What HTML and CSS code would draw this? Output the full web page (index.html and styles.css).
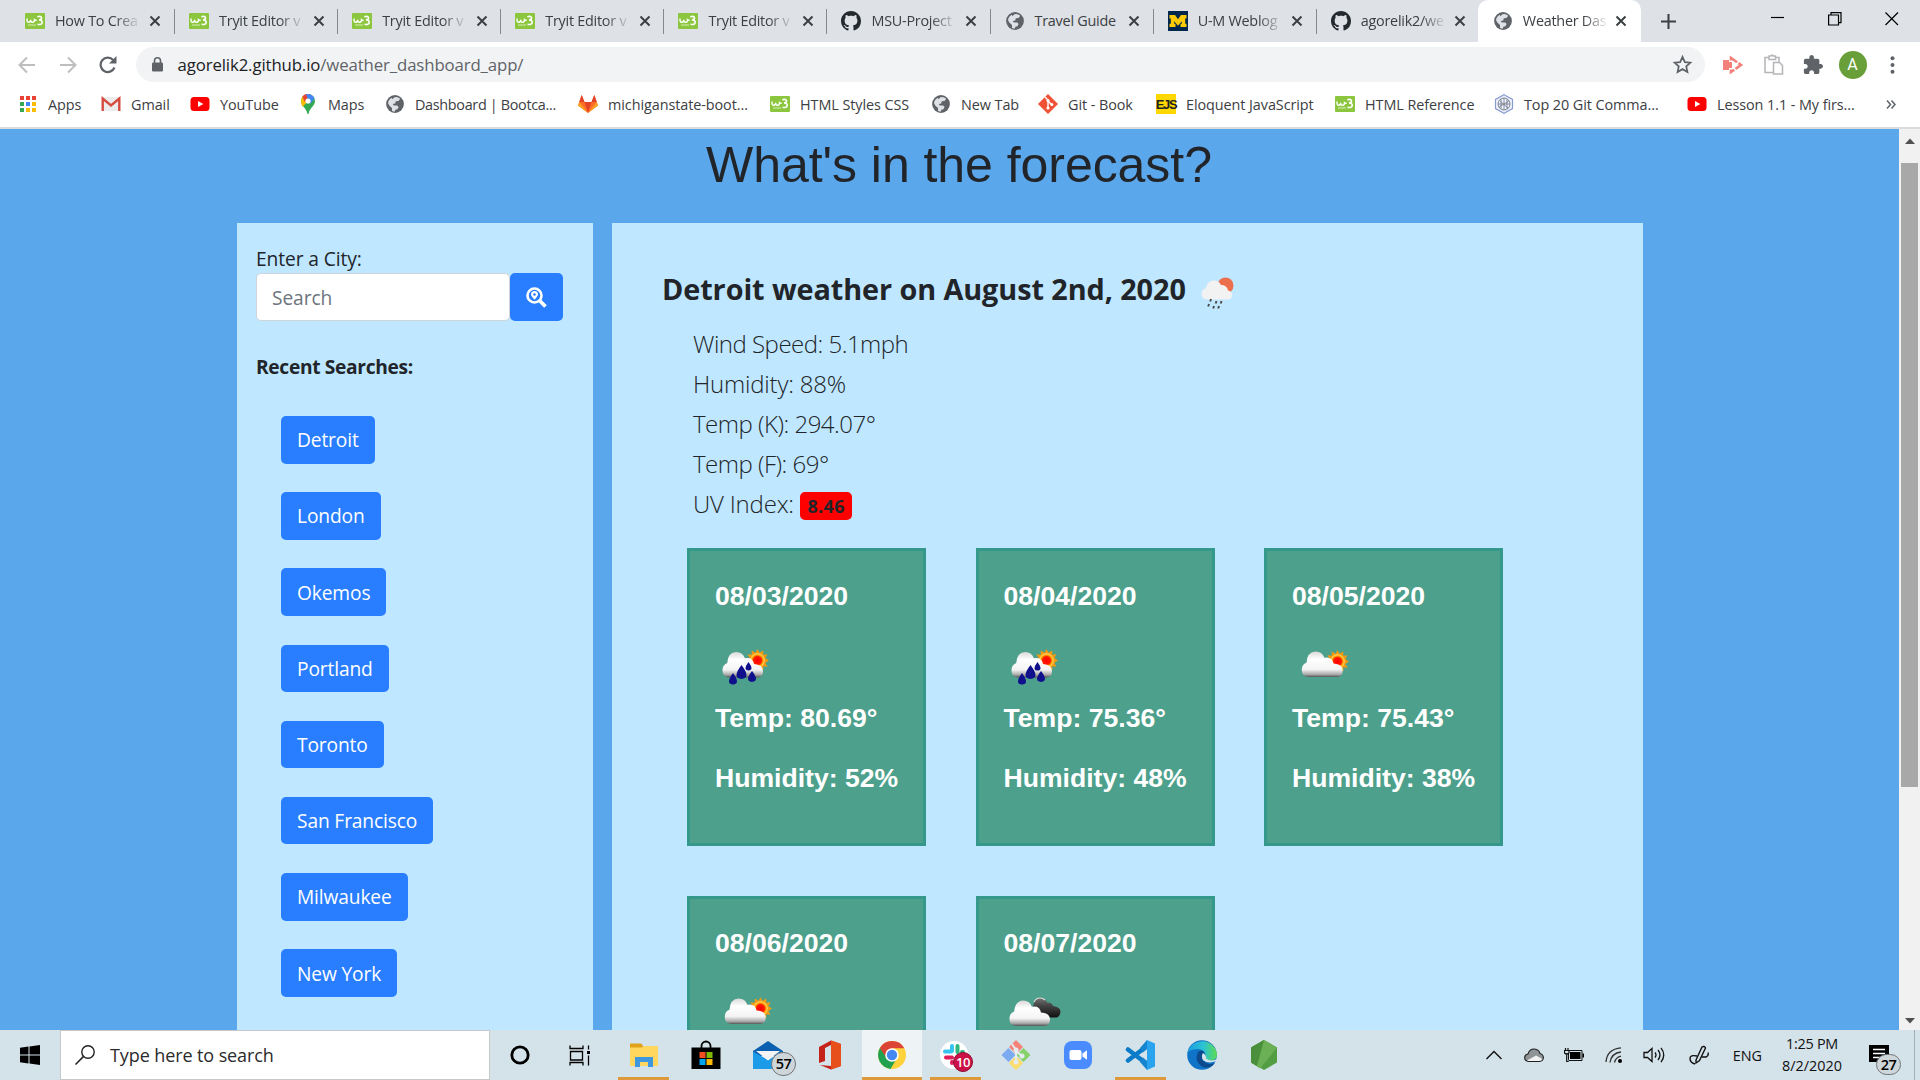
FILE: index.html
```html
<!DOCTYPE html>
<html lang="en">
<head>
<meta charset="utf-8">
<title>Weather Dashboard</title>
<link rel="stylesheet" href="styles.css">
</head>
<body>
<svg class="defs" width="0" height="0" aria-hidden="true">
  <defs>
    <linearGradient id="cloudFill" x1="0" y1="0" x2="0" y2="1">
      <stop offset="0" stop-color="#d9d9d9"/><stop offset=".3" stop-color="#fff"/><stop offset=".7" stop-color="#f4f4f4"/><stop offset=".9" stop-color="#a8a8a8"/><stop offset="1" stop-color="#555"/>
    </linearGradient>
    <linearGradient id="darkFill" x1="0" y1="0" x2="0" y2="1">
      <stop offset="0" stop-color="#777"/><stop offset=".4" stop-color="#444"/><stop offset="1" stop-color="#111"/>
    </linearGradient>
    <radialGradient id="sunFill"><stop offset="0" stop-color="#f00"/><stop offset=".55" stop-color="#ff1a00"/><stop offset=".8" stop-color="#ffb400"/><stop offset="1" stop-color="#ffd98a"/></radialGradient>
    <linearGradient id="edgeA" x1="0" y1="0" x2="1" y2="0"><stop offset="0" stop-color="#1b9de2"/><stop offset=".55" stop-color="#2cc3d2"/><stop offset="1" stop-color="#5fdc4e"/></linearGradient>
  </defs>
  <symbol id="w3" viewBox="0 0 20 20">
    <rect x="0" y="2" width="20" height="16" rx="1" fill="#8cc63f"/>
    <path d="M2 7.500q-.3 4 1.900 3.800 1.800-.2 1.800-2.500-.1 2.500 1.800 2.500 2 0 2-2.600 1 1 2.300.3" fill="none" stroke="#fff" stroke-width="1.400"/>
    <path d="M12.300 5.700q4-1 4.200 1 .1 2-2.500 2.300 3.500 0 3.200 2.600-.5 2.600-4.700 1.700" fill="none" stroke="#fff" stroke-width="1.600"/>
    <path d="M3 14h8" stroke="#d8edb8" stroke-width="1"/>
  </symbol>
  <symbol id="globe" viewBox="0 0 20 20">
    <circle cx="10" cy="10" r="8.900" fill="#5f6368"/>
    <path d="M9.500 3.300q3.300-.8 5.700 1.500L13.500 7l-2.700.3-.6 2.200-2.400.6 1 1.400h3.400l1.400 1.500-1.200 2.200-2 .6-.7 2-2.700-.8V14l-2.500-2.300L3 9.200Q3.400 5.200 7 3.700l.3 1.600z" fill="#dee1e6"/>
  </symbol>
  <symbol id="github" viewBox="0 0 16 16">
    <path fill="#24292e" d="M8 0C3.580 0 0 3.580 0 8c0 3.540 2.290 6.530 5.470 7.590.4.070.55-.17.55-.38 0-.19-.01-.82-.01-1.490-2.010.37-2.530-.49-2.690-.94-.09-.23-.48-.94-.82-1.130-.28-.15-.68-.52-.01-.53.63-.01 1.080.58 1.230.82.72 1.210 1.870.87 2.330.66.07-.52.28-.87.51-1.070-1.780-.2-3.640-.89-3.640-3.950 0-.87.31-1.590.82-2.150-.08-.2-.36-1.020.08-2.120 0 0 .67-.21 2.200.82.64-.18 1.320-.27 2-.27s1.360.09 2 .27c1.530-1.040 2.200-.82 2.200-.82.44 1.100.16 1.920.08 2.120.51.56.82 1.270.82 2.150 0 3.070-1.870 3.750-3.650 3.950.29.25.54.73.54 1.480 0 1.070-.01 1.930-.01 2.200 0 .21.15.46.55.38A8.010 8.010 0 0016 8c0-4.420-3.580-8-8-8z"/>
  </symbol>
  <symbol id="x" viewBox="0 0 12 12"><path d="M1.500 1.500l9 9M10.500 1.500l-9 9" stroke="#3c4043" stroke-width="2" fill="none"/></symbol>
  <symbol id="youtube" viewBox="0 0 20 20"><rect x=".5" y="3" width="19" height="14" rx="3.500" fill="#f00"/><path d="M8 7l5.300 3L8 13z" fill="#fff"/></symbol>
  <symbol id="sun" viewBox="0 0 24 24">
    <path d="M12 0l2 4 4-2.500v4.600l4.500-.6-2.300 4L24 12l-3.800 2.500 2.300 4-4.500-.6v4.600L14 20l-2 4-2-4-4 2.500v-4.600l-4.500.6 2.300-4L0 12l3.800-2.500-2.300-4 4.500.6V1.500L10 4z" fill="#f39a10"/>
    <circle cx="12" cy="12" r="7.500" fill="url(#sunFill)"/>
  </symbol>
  <symbol id="cloud" viewBox="0 0 44 28">
    <path d="M7 27q-6.500-.5-6.500-7.500 0-5.500 5-7.500Q6 1 15 .500q6.500 0 9 6.500 8-1.500 9.500 6 9.500.5 9.500 7.500 0 6-6 6.500z" fill="url(#cloudFill)"/>
  </symbol>
  <symbol id="rainSun" viewBox="0 0 62 62">
    <use href="#sun" x="32" y="13" width="23" height="23"/>
    <use href="#cloud" x="8" y="15.500" width="42" height="27"/>
    <g fill="#10108c"><path d="M19 37q8 11 0 11.500-8-.5 0-11.500zM27.500 29q10 13 0 14-10-1 0-14zM38 35q8 10 0 11-8-1 0-11zM34.500 26q6 8 0 8.500-6-.5 0-8.500z"/></g>
  </symbol>
  <symbol id="cloudSun" viewBox="0 0 62 62">
    <use href="#sun" x="35" y="14" width="23" height="23"/>
    <use href="#cloud" x="10" y="15" width="43" height="27"/>
  </symbol>
  <symbol id="clouds" viewBox="0 0 62 62">
    <path d="M30 24q1-9 7-9.500 5 0 7 5 5-.5 6 3.500 7.500 1 7.500 5.500-.5 6-5 6H38z" fill="url(#darkFill)"/>
    <path d="M31 19q2-4 6-4 3 0 5 2" stroke="#ddd" stroke-width="1.200" fill="none"/>
    <use href="#cloud" x="6" y="17" width="42" height="27"/>
  </symbol>
</svg>

<div class="screen">
  <div class="tabs">
    <div class="tab"><svg class="fav"><use href="#w3"/></svg><span class="ttl">How To Crea</span><svg class="close"><use href="#x"/></svg></div>
    <div class="tab"><svg class="fav"><use href="#w3"/></svg><span class="ttl">Tryit Editor v</span><svg class="close"><use href="#x"/></svg></div>
    <div class="tab"><svg class="fav"><use href="#w3"/></svg><span class="ttl">Tryit Editor v</span><svg class="close"><use href="#x"/></svg></div>
    <div class="tab"><svg class="fav"><use href="#w3"/></svg><span class="ttl">Tryit Editor v</span><svg class="close"><use href="#x"/></svg></div>
    <div class="tab"><svg class="fav"><use href="#w3"/></svg><span class="ttl">Tryit Editor v</span><svg class="close"><use href="#x"/></svg></div>
    <div class="tab"><svg class="fav"><use href="#github"/></svg><span class="ttl">MSU-Project</span><svg class="close"><use href="#x"/></svg></div>
    <div class="tab"><svg class="fav"><use href="#globe"/></svg><span class="ttl whole">Travel Guide</span><svg class="close"><use href="#x"/></svg></div>
    <div class="tab"><svg class="fav" viewBox="0 0 20 20"><path d="M0 0h20v20H0z" fill="#00274c"/><path d="M1.500 4h5.500l3 4.200L13 4h5.500v3.500h-1.300v5.300h1.300V16h-6v-3.200h1.300v-2.600L10 14.800l-3.800-4.600v2.600h1.300V16h-6v-3.200h1.300V7.500H1.500z" fill="#ffcb05"/></svg><span class="ttl">U-M Weblog</span><svg class="close"><use href="#x"/></svg></div>
    <div class="tab before-active"><svg class="fav"><use href="#github"/></svg><span class="ttl">agorelik2/we</span><svg class="close"><use href="#x"/></svg></div>
    <div class="tab active"><svg class="fav"><use href="#globe"/></svg><span class="ttl">Weather Das</span><svg class="close"><use href="#x"/></svg></div>
    <svg class="newtab" viewBox="0 0 16 16"><path d="M8 0v16M0 8h16" stroke="#3c4043" stroke-width="2.200"/></svg>
    <div class="winctl">
      <svg viewBox="0 0 14 14"><path d="M0 5.500h13" stroke="#000" stroke-width="1.200"/></svg>
      <svg viewBox="0 0 14 14"><path d="M.6 3h9.900v10H.6zM3 3V.6h10v10h-2.500" stroke="#000" stroke-width="1.200" fill="none"/></svg>
      <svg viewBox="0 0 14 14"><path d="M.5.500l12.500 12.500M13 .500L.5 13" stroke="#000" stroke-width="1.200"/></svg>
    </div>
  </div>

  <div class="toolbar">
    <svg class="nav" viewBox="0 0 18 18"><path d="M17 9H2M9 1.500L1.500 9 9 16.500" stroke="#bcbec0" stroke-width="2" fill="none"/></svg>
    <svg class="nav" viewBox="0 0 18 18"><path d="M1 9h15M9 1.500L16.500 9 9 16.500" stroke="#bcbec0" stroke-width="2" fill="none"/></svg>
    <svg class="nav" viewBox="0 0 18 18"><path d="M15.500 11.500A7.200 7.200 0 1 1 14.200 4" stroke="#5f6368" stroke-width="2.200" fill="none"/><path d="M17.500 0v7.500H10z" fill="#5f6368"/></svg>
    <div class="omnibox">
      <svg class="lock" viewBox="0 0 11 15"><path d="M2.500 6V3.800a3 3 0 0 1 6 0V6" fill="none" stroke="#5f6368" stroke-width="1.600"/><rect y="5.500" width="11" height="9" rx="1.200" fill="#5f6368"/></svg>
      <span class="url"><b>agorelik2.github.io</b>/weather_dashboard_app/</span>
      <svg class="star" viewBox="0 0 24 24"><path d="M12 3.300l2.700 6 6.300.6-4.700 4.300 1.300 6.400-5.600-3.300-5.600 3.300 1.300-6.400L3 9.900l6.300-.6z" fill="none" stroke="#5f6368" stroke-width="2"/></svg>
    </div>
    <div class="exts">
      <svg width="21" height="20" viewBox="0 0 21 20"><path d="M0 5h6v10H0z" fill="#f4807b"/><path d="M8 5.500V3l10 7-10 7v-2.500" fill="none" stroke="#f4807b" stroke-width="2.600" stroke-dasharray="10 1.500"/><path d="M6 7h3v6H6z" fill="#f4807b"/></svg>
      <svg width="20" height="21" viewBox="0 0 20 21"><path d="M9.500 18.500H1v-15h3.500m7 0H15v5M5 2h2q1-2 2 0h2.500v3.500H5zM9.500 8.500h6l3 3v8.500h-9z" fill="none" stroke="#b3b5b8" stroke-width="1.500"/></svg>
      <svg class="puzzle" width="20" height="20" viewBox="1 1 22 22"><path fill="#5f6368" d="M20.500 11H19V7c0-1.100-.9-2-2-2h-4V3.500C13 2.120 11.880 1 10.500 1S8 2.120 8 3.500V5H4c-1.100 0-1.990.9-1.990 2v3.800H3.500c1.490 0 2.700 1.210 2.700 2.700s-1.210 2.700-2.700 2.700H2V20c0 1.100.9 2 2 2h3.800v-1.500c0-1.490 1.210-2.700 2.700-2.700 1.490 0 2.700 1.210 2.700 2.700V22H17c1.100 0 2-.9 2-2v-4h1.500c1.380 0 2.500-1.120 2.500-2.500S21.880 11 20.500 11z"/></svg>
      <span class="avatar">A</span>
      <svg width="5" height="18" viewBox="0 0 5 18"><g fill="#5f6368"><circle cx="2.500" cy="2.300" r="2"/><circle cx="2.500" cy="9" r="2"/><circle cx="2.500" cy="15.700" r="2"/></g></svg>
    </div>
  </div>

  <div class="bookmarks">
    <div class="bm"><svg viewBox="0 0 20 20"><g><path d="M2 2h4v4H2zM8 2h4v4H8zM14 2h4v4h-4z" fill="#ea4335"/><path d="M2 8h4v4H2z" fill="#34a853"/><path d="M8 8h4v4H8z" fill="#4285f4"/><path d="M14 8h4v4h-4zM8 14h4v4H8zM14 14h4v4h-4z" fill="#fbbc05"/><path d="M2 14h4v4H2z" fill="#34a853"/></g></svg><span>Apps</span></div>
    <div class="bm"><svg viewBox="0 0 20 20"><path d="M1 3h18v14H1z" fill="#ececec"/><path d="M1.700 17V4.500l8.300 7 8.300-7V17" fill="none" stroke="#d54b3d" stroke-width="2.400"/></svg><span>Gmail</span></div>
    <div class="bm"><svg><use href="#youtube"/></svg><span>YouTube</span></div>
    <div class="bm"><svg viewBox="0 0 20 20"><path d="M10 0a7 7 0 0 1 7 7c0 5-5.500 7-6.300 12.500q-.7 1-1.400 0C8.500 14 3 12 3 7a7 7 0 0 1 7-7z" fill="#34a853"/><path d="M3 7a7 7 0 0 1 2-5l5 5-5.500 6Q3 10 3 7z" fill="#fbbc04"/><path d="M4.500 2.500A7 7 0 0 1 12.500.500L6.500 8z" fill="#ea4335"/><path d="M8 .300A7 7 0 0 1 16.500 4.500L12 10z" fill="#4285f4"/><circle cx="10" cy="7" r="2.600" fill="#fff"/></svg><span>Maps</span></div>
    <div class="bm"><svg><use href="#globe"/></svg><span>Dashboard | Bootca...</span></div>
    <div class="bm"><svg viewBox="0 0 20 20"><path d="M10 19L0 11.500 3.700 1l2.800 7h7l2.800-7L20 11.500z" fill="#fc6d26"/><path d="M10 19L6.500 8h7z" fill="#e24329"/><path d="M10 19L0 11.500 1.200 8zM10 19l10-7.500L18.800 8z" fill="#fca326"/><path d="M1.200 8L3.700 1l2.800 7zM18.800 8l-2.500-7-2.800 7z" fill="#e24329"/></svg><span>michiganstate-boot...</span></div>
    <div class="bm"><svg><use href="#w3"/></svg><span>HTML Styles CSS</span></div>
    <div class="bm"><svg><use href="#globe"/></svg><span>New Tab</span></div>
    <div class="bm"><svg viewBox="0 0 20 20"><path d="M10 0l10 10-10 10L0 10z" fill="#f05033"/><path d="M7 3l3 3v8M10 7l4 4" stroke="#fff" stroke-width="1.400" fill="none"/><g fill="#fff"><circle cx="10" cy="6.500" r="1.600"/><circle cx="10" cy="14" r="1.600"/><circle cx="13.800" cy="10.500" r="1.600"/></g></svg><span>Git - Book</span></div>
    <div class="bm"><span class="ejs">EJS</span><span>Eloquent JavaScript</span></div>
    <div class="bm"><svg><use href="#w3"/></svg><span>HTML Reference</span></div>
    <div class="bm"><svg viewBox="0 0 20 20"><path d="M10 .700l8.500 4.700v9.200L10 19.300l-8.500-4.700V5.400z" fill="#f2f4fb" stroke="#8a9bd0" stroke-width="1.200"/><circle cx="10" cy="10" r="6" fill="none" stroke="#7a8296"/><path d="M7 5v10M10 4v12M13 5v10M4 10h12M5 13l10-6M6 7l8 7" stroke="#7a8296" stroke-width=".9"/></svg><span>Top 20 Git Comma...</span></div>
    <div class="bm"><svg><use href="#youtube"/></svg><span>Lesson 1.1 - My firs...</span></div>
    <svg class="more" viewBox="0 0 10 9"><path d="M1 .500l3.500 4-3.500 4M5.500.500l3.500 4-3.500 4" fill="none" stroke="#5f6368" stroke-width="1.500"/></svg>
  </div>

  <div class="viewport">
    <main class="page">
      <h1>What's in the forecast?</h1>
      <div class="columns">
        <aside class="panel side">
          <label for="city">Enter a City:</label>
          <div class="search">
            <input id="city" type="text" placeholder="Search">
            <button type="button"><svg viewBox="0 0 21 21"><circle cx="8.500" cy="8.500" r="7" fill="none" stroke="#fff" stroke-width="2.600"/><path d="M13.500 13.500l6 6" stroke="#fff" stroke-width="3.800"/><path d="M8.500 12.800Q5 9 5 7.500a3.500 3.500 0 0 1 7 0Q12 9 8.500 12.800z" fill="#fff"/><circle cx="8.500" cy="7.500" r="1.300" fill="#287eff"/></svg></button>
          </div>
          <h2>Recent Searches:</h2>
          <div class="recent">
            <button type="button">Detroit</button>
            <button type="button">London</button>
            <button type="button">Okemos</button>
            <button type="button">Portland</button>
            <button type="button">Toronto</button>
            <button type="button">San Francisco</button>
            <button type="button">Milwaukee</button>
            <button type="button">New York</button>
          </div>
        </aside>
        <section class="panel main">
          <h3><span>Detroit weather on August 2nd, 2020</span>
            <svg viewBox="0 0 34 32"><circle cx="24.500" cy="8.500" r="8" fill="#ec6e4c"/><path d="M6 22.500q-5.500-.5-5.500-5.500 0-4.500 4.500-6 1.500-7.500 8-7.500 5 0 7 4.500 6 0 7 5.500 4 .5 4 4.500t-4 4.500z" fill="#f2f2f2"/><path d="M10 22l-.8 2.500M15.500 24l-.8 2.500M20.500 24l-.8 2.500M8 27l-.8 2.500M13 29l-.8 2.500M18 29l-.8 2.500" stroke="#48484a" stroke-width="1.900"/></svg></h3>
          <ul class="facts">
            <li class="wind">Wind Speed: 5.1mph</li>
            <li>Humidity: 88%</li>
            <li class="temp">Temp (K): 294.07°</li>
            <li class="temp">Temp (F): 69°</li>
            <li>UV Index: <span class="uv">8.46</span></li>
          </ul>
          <div class="cards">
            <article class="card"><p>08/03/2020</p><svg><use href="#rainSun"/></svg><p class="t">Temp: 80.69°</p><p>Humidity: 52%</p></article>
            <article class="card"><p>08/04/2020</p><svg><use href="#rainSun"/></svg><p class="t">Temp: 75.36°</p><p>Humidity: 48%</p></article>
            <article class="card"><p>08/05/2020</p><svg><use href="#cloudSun"/></svg><p class="t">Temp: 75.43°</p><p>Humidity: 38%</p></article>
            <article class="card"><p>08/06/2020</p><svg><use href="#cloudSun"/></svg></article>
            <article class="card"><p>08/07/2020</p><svg><use href="#clouds"/></svg></article>
          </div>
        </section>
      </div>
    </main>
    <div class="scrollbar">
      <svg viewBox="0 0 10 6"><path d="M0 6l5-5.500L10 6z" fill="#505050"/></svg>
      <div class="thumb"></div>
      <svg viewBox="0 0 10 6"><path d="M0 0l5 5.500L10 0z" fill="#505050"/></svg>
    </div>
  </div>

  <div class="taskbar">
    <div class="start"><svg viewBox="0 0 20 20"><path d="M0 2.800l8.500-1.200v7.900H0zM9.500 1.500L20 0v9.500H9.500zM0 10.500h8.500v7.900L0 17.200zM9.500 10.500H20V20L9.500 18.500z" fill="#000"/></svg></div>
    <div class="tsearch"><svg viewBox="0 0 20 20"><circle cx="13" cy="7" r="6.200" fill="none" stroke="#222" stroke-width="1.400"/><path d="M8.600 11.400L.5 19.500" stroke="#222" stroke-width="1.500"/></svg><span>Type here to search</span></div>
    <div class="apps">
      <div class="app"><svg viewBox="0 0 30 30"><circle cx="15" cy="15" r="8.200" fill="none" stroke="#000" stroke-width="2.800"/></svg></div>
      <div class="app"><svg viewBox="0 0 30 30"><path d="M5 5.500v3h13v-3M5.500 11.500h12v8.500h-12zM5 25.500v-3h13v3M23.500 5.500v4M23.500 15.500v10" fill="none" stroke="#000" stroke-width="1.300"/><path d="M22 11h3v3h-3z"/></svg></div>
      <div class="app run"><svg viewBox="0 0 30 30"><path d="M1 3.500h11l2 2v5H1z" fill="#e0a11b"/><path d="M1 7.500h12l2-1.500h14v20H1z" fill="#ffd75e"/><path d="M6 27V17h18v10h-5v-5h-8v5z" fill="#3f97dd"/></svg></div>
      <div class="app"><svg viewBox="0 0 30 30"><path d="M10.500 9V6a4.500 4.500 0 0 1 9 0v3" fill="none" stroke="#000" stroke-width="1.800"/><path d="M.5 7.500h29v21.500H.5z"/><path d="M8.500 12h6v6h-6z" fill="#f25022"/><path d="M15.500 12h6v6h-6z" fill="#7fba00"/><path d="M8.500 19h6v6h-6z" fill="#00a4ef"/><path d="M15.500 19h6v6h-6z" fill="#ffb900"/></svg></div>
      <div class="app"><svg viewBox="0 0 30 30"><path d="M0 11L15 1l15 10v5H0z" fill="#0a5fb0"/><path d="M0 11.500L15 20l15-8.500V29H0z" fill="#1c9be8"/><path d="M3 11h24l-12 9.500z" fill="#f3f3f3"/></svg><span class="badge">57</span></div>
      <div class="app"><svg viewBox="0 0 30 30"><path d="M4 7L16 .500 26 4v22l-10 3.500L5 25l11 1V5L10 8v13l-6 2z" fill="#c4221b"/><path d="M16 .500L26 4v22l-10 3.500z" fill="#e8501b"/></svg></div>
      <div class="app run current"><svg viewBox="0 0 30 30"><circle cx="15" cy="15" r="14" fill="#fdd23c"/><path d="M15 15L2.900 8A14 14 0 0 0 13.500 28.900L20 18z" fill="#22a150"/><path d="M2.900 8A14 14 0 0 1 27.300 8.300H15l-6 9z" fill="#dc4437"/><circle cx="15" cy="15" r="6.800" fill="#fff"/><circle cx="15" cy="15" r="5.200" fill="#4688f1"/></svg></div>
      <div class="app run"><svg viewBox="0 0 30 30"><circle cx="14" cy="15" r="14" fill="#fff"/><g stroke-width="4" stroke-linecap="round"><path d="M12 6v5M5 11.500h6" stroke="#36c5f0"/><path d="M17.500 6v6M22 12h1" stroke="#2eb67d"/><path d="M6 17.500h6M12 22v1" stroke="#e01e5a"/><path d="M17.500 18v5M18 17.500h5" stroke="#ecb22e"/></g></svg><span class="badge ten">10</span></div>
      <div class="app"><svg viewBox="0 0 30 30"><g><path d="M15 0l7 7-7 7-7-7z" fill="#f48279"/><path d="M7.500 8l7 7-7 7-7-7z" fill="#7dabf2"/><path d="M22.500 8l7 7-7 7-7-7z" fill="#86d16a"/><path d="M15 16l7 7-7 7-7-7z" fill="#fbdc6a"/></g><path d="M11 4l4 6v12M15 11l6 5" stroke="#e5ecef" stroke-width="2" fill="none"/><g fill="#e5ecef"><circle cx="15" cy="10" r="2.500"/><circle cx="15" cy="22" r="2.500"/><circle cx="21" cy="16" r="2.500"/></g></svg></div>
      <div class="app"><svg viewBox="0 0 30 30"><rect x="1" y="1" width="28" height="28" rx="8" fill="#4a8cff"/><rect x="6.500" y="10" width="12" height="10" rx="2" fill="#fff"/><path d="M19.500 13.500L24 10.300v9.400l-4.500-3.200z" fill="#fff"/></svg></div>
      <div class="app run"><svg viewBox="0 0 30 30"><path d="M22 6L3 20.500M22 24L3 9.500" stroke="#0a7bc8" stroke-width="4.500" stroke-linecap="round"/><path d="M22 0l8 3.500v23L22 30z" fill="#2aa4ee"/><path d="M15 8l7-8v9l-4 3.500zM15 22l7 8v-9l-4-3.500z" fill="#1585cf"/></svg></div>
      <div class="app"><svg viewBox="0 0 30 30"><circle cx="15" cy="15" r="14.800" fill="#0f74c8"/><path d="M.5 13A15 15 0 0 1 30 14q0 7-8 7-5-.5-3.500-4 1-7-7-8Q3 9 .5 13z" fill="url(#edgeA)"/><path d="M11 12q-4 8 3 14 5 3 11 0a15 15 0 0 0 3-3q-5 2-9 0-5-3-4-8 3-2 2-3-3-3-6 0z" fill="#0c4a8d"/><path d="M16 13q-2.500 4 .5 7.500 5 3.500 13 .5l-1 3q4-2 1.500-5-6 3-11-.5 1-3-3-5.500z" fill="#d5e2e8"/></svg></div>
      <div class="app"><svg viewBox="0 0 30 30"><path d="M15 0l13 7.500v15L15 30 2 22.500v-15z" fill="#539e43"/><path d="M15 0l13 7.500-17 21L2 22.500v-15z" fill="#6cb055"/><path d="M15 0L2 7.500v15L8 26z" fill="#4a8f3c"/></svg></div>
    </div>
    <div class="tray">
      <svg class="chev" viewBox="0 0 16 16"><path d="M.5 12L8 4.500 15.500 12" fill="none" stroke="#111" stroke-width="1.400"/></svg>
      <svg class="onedrive" viewBox="0 0 20 16"><path d="M4.500 14.500Q.6 14 .6 10.600.8 7.500 4 7q1.500-5.200 6.500-5 4.500.5 5.500 4.500 3.300.8 3.400 4.200-.4 3.400-4 3.800z" fill="#8f9496" stroke="#222" stroke-width="1.100"/><path d="M3 13.500l9-5 6.500 3.500q-1 2-3.500 2H4.500z" fill="#f2f2f2"/></svg>
      <svg viewBox="0 0 20 16"><path d="M4.500 3.500h13.500v10H4.500z" fill="none" stroke="#111"/><path d="M6 5h10.500v7H6zM18.500 6.500h1.500v4h-1.500z"/><path d="M1.500 1v2.500M4 1v2.500M.5 3.500h4.500v2.500q-2.200 2-4.500 0zM2.700 7v7.500h2" stroke="#111" stroke-width="1.200" fill="#d5e2e8"/></svg>
      <svg class="wifi" viewBox="0 0 20 18"><circle cx="16" cy="15" r="2"/><path d="M2 16Q3 3 17 1.800M6 16.500Q7.500 7 17 6M10.500 16.500Q12 11 17 10.200" fill="none" stroke="#333" stroke-width="1.300"/></svg>
      <svg class="vol" viewBox="0 0 22 18"><path d="M1 6.500h3.500L9 2.500v13L4.500 11.500H1z" fill="none" stroke="#111" stroke-width="1.300"/><path d="M12 6.500q2 2.500 0 5M15 4q4 5 0 10M18 1.800q5.500 7 0 14.400" fill="none" stroke="#111" stroke-width="1.300"/></svg>
      <svg viewBox="0 0 20 20"><path d="M7 15L13 2q2.500-1.500 3.500 1L10.500 15.500 7 18z" fill="none" stroke="#111" stroke-width="1.400"/><path d="M8 11q-7-1.500-7 2.500t5 5.500M13 12h4q3-1 2-4.500" fill="none" stroke="#111" stroke-width="1.400"/></svg>
      <span class="lang">ENG</span>
      <span class="clock"><span>1:25 PM</span><span>8/2/2020</span></span>
      <span class="notes"><svg viewBox="0 0 20 20"><path d="M0 0h20v17h-5v3l-4-3H0z"/><path d="M4 4.500h12M4 8.500h12M4 12.500h8" stroke="#fff" stroke-width="1.300"/></svg><span class="badge n27">27</span></span>
      <span class="peek"></span>
    </div>
  </div>
</div>
</body>
</html>
```
FILE: styles.css
```css
* { box-sizing: border-box; }
body { margin: 0; overflow: hidden; font-family: "Open Sans", "Noto Sans", sans-serif; }
.defs { position: absolute; }
svg { display: block; flex: none; }
h1, h2, h3, p, ul { margin: 0; padding: 0; }
.screen { display: flex; flex-direction: column; width: 1920px; height: 1080px; overflow: hidden; }

/* browser tabs */
.tabs { display: flex; height: 42px; padding-left: 12px; background: #dee1e6; }
.tab { position: relative; display: flex; align-items: center; width: 163.100px; height: 42px; padding-left: 14px; font-size: 14.400px; letter-spacing: -.25px; color: #3c4043; }
.tab:first-child { padding-left: 13px; }
.tab::after { content: ""; position: absolute; right: 0; top: 9px; width: 1px; height: 25px; background: #85888d; }
.tab.active::after, .tab.before-active::after { display: none; }
.tab.active { width: 163px; margin-left: -2px; padding-left: 15px; background: #fff; border-radius: 10px 10px 0 0; }
.fav { width: 20px; height: 20px; }
.ttl { width: 84px; margin-left: 10px; line-height: 20px; white-space: nowrap; -webkit-mask-image: linear-gradient(90deg, #000 60px, transparent 86px); mask-image: linear-gradient(90deg, #000 60px, transparent 86px); }
.whole { -webkit-mask-image: none; mask-image: none; }
.close { width: 12px; height: 12px; margin-left: 9.500px; }
.active .close { margin-left: 8px; }
.newtab { width: 15px; height: 15px; margin: 14px 0 0 20px; }
.winctl { display: flex; gap: 43px; margin: 12px 21.500px 0 auto; }
.winctl svg { width: 14px; height: 14px; }

/* address row */
.toolbar { display: flex; align-items: center; height: 45px; padding-left: 18px; background: #fff; }
.nav { width: 18px; height: 18px; margin-right: 22.500px; }
.omnibox { display: flex; align-items: center; width: 1569px; height: 35px; margin-left: -4px; padding: 0 12px 0 16px; border-radius: 18px; background: #f1f3f4; }
.lock { width: 11px; height: 15px; }
.url { margin-left: 15px; font-size: 16.800px; letter-spacing: -.12px; color: #5f6368; }
.url b { font-weight: 400; color: #202124; }
.star { width: 21px; height: 21px; margin-left: auto; }
.exts { display: flex; align-items: center; gap: 20px; margin-left: 18px; }
.puzzle { margin: 0 1px 0 -1px; }
.avatar { display: flex; align-items: center; justify-content: center; width: 28px; height: 28px; margin: 0 3px 0 -5px; border-radius: 50%; background: #689f38; color: #fff; font: 16px Roboto, sans-serif; }

/* bookmarks */
.bookmarks { display: grid; grid-template-columns: 83px 89px 108px 87px 193px 192px 161px 107px 118px 179px 159px 193px 199px 12px; align-items: center; height: 42px; padding: 0 0 6px 18px; background: #fff; border-bottom: 2px solid #dadce0; }
.bm { display: flex; align-items: center; gap: 10px; font-size: 14.400px; letter-spacing: -.070px; color: #3c4043; white-space: nowrap; }
.bm svg, .ejs { width: 20px; height: 20px; }
.bm:nth-child(5) { letter-spacing: -.32px; }
.ejs { display: flex; align-items: center; justify-content: center; background: #ffd800; color: #222; font: 700 13px/1 "Liberation Sans", sans-serif; letter-spacing: -1.300px; }
.more { width: 10px; height: 9px; }

/* page */
.viewport { display: flex; height: 901px; }
.page { width: 1899px; padding-top: 6px; background: #5ba7ec; overflow: hidden; color: #212529; }
h1 { padding-left: 19px; font: 400 50px/60px "Liberation Sans", Arial, sans-serif; letter-spacing: -.05px; text-align: center; }
.columns { display: flex; gap: 19px; padding: 28px 0 0 237px; }
.panel { height: 807px; background: #bfe7ff; }
.side { width: 356px; padding: 21px 0 0 19px; font-size: 19.200px; letter-spacing: -.1px; }
.side label { display: block; height: 29px; line-height: 30px; }
.search { display: flex; }
.search input { width: 254px; height: 48px; padding: 0 15px; border: 1px solid #ced4da; border-radius: 5px; background: #fff; font: inherit; letter-spacing: inherit; }
.search input::placeholder { color: #6c757d; opacity: 1; }
.search button { display: flex; align-items: center; justify-content: center; width: 53px; height: 48px; padding: 0; border: 0; border-radius: 5px; background: #287eff; }
.search button svg { width: 21px; height: 21px; }
h2 { margin-top: 31px; font-size: 19.200px; line-height: 30px; letter-spacing: -.33px; }
.recent { display: flex; flex-direction: column; align-items: flex-start; gap: 28.700px; margin: 34px 0 0 25px; }
.recent button { height: 47.500px; padding: 0 16px; border: 0; border-radius: 5px; background: #287eff; color: #fff; font: inherit; letter-spacing: -.14px; }
.main { width: 1031px; padding: 48px 0 0 50px; }
h3 { display: flex; align-items: center; gap: 15px; height: 36px; font-size: 28.800px; line-height: 36px; letter-spacing: -.07px; }
h3 svg { width: 34px; height: 32px; margin-top: 7px; }
.facts { margin: 16px 0 25px 31px; font-size: 24px; font-weight: 300; list-style: none; }
.facts li { display: flex; align-items: center; height: 40px; letter-spacing: -.2px; }
.facts .wind { letter-spacing: -.5px; }
.facts .temp { letter-spacing: -.5px; }
.uv { margin: 5px 0 0 6px; padding: 0 7.500px; border-radius: 5px; background: #f00; font-size: 18px; font-weight: 700; line-height: 28px; letter-spacing: .35px; }

/* forecast cards */
.cards { display: grid; grid-template-columns: repeat(3, 239px); grid-auto-rows: 298px; gap: 49.500px; padding-left: 25px; }
.card { padding: 28.500px 0 0 25px; border: 3px solid #34998a; background: #4da08c; color: #fff; font: 700 26.600px/32px "Liberation Sans", Arial, sans-serif; white-space: nowrap; }
.card svg { width: 62px; height: 62px; margin: 24px 0 4px -1px; }
.card .t { margin-bottom: 28px; }

.scrollbar { display: flex; flex-direction: column; align-items: center; width: 21px; padding: 9px 0 6px; background: #f1f1f1; }
.scrollbar svg { width: 10px; height: 6px; }
.thumb { width: 17px; height: 624px; margin: 19px 0 auto; background: #a8a8a8; }

/* taskbar */
.taskbar { display: flex; height: 50px; background: #d4e2e9; }
.start { display: flex; align-items: center; justify-content: center; width: 60px; }
.start svg { width: 20px; height: 20px; }
.tsearch { display: flex; align-items: center; gap: 15px; width: 430px; padding-left: 14px; border: 1px solid #c6c9cb; background: #fff; font-size: 18px; letter-spacing: -.1px; color: #2b2b2b; }
.tsearch svg { width: 20px; height: 20px; }
.apps { display: grid; grid-template-columns: 60px 60px 67px 57px 68px 56px 68px 58px 63px 62px 62px 62px 62px; }
.app { position: relative; display: flex; align-items: center; justify-content: center; }
.app svg { width: 30px; height: 30px; }
.run::after { content: ""; position: absolute; left: 50%; bottom: 0; width: 51px; height: 3px; margin-left: -25.500px; background: #de9a3a; }
.current::before { content: ""; position: absolute; inset: 0 auto 0 50%; width: 60px; margin-left: -30px; background: #eef3f6; }
.current::after { width: 60px; margin-left: -30px; }
.current svg { position: relative; }
.badge { position: absolute; left: 37px; bottom: 4px; width: 25px; height: 24px; border: 1px solid #6f7578; border-radius: 12px; background: #cfd6d9; color: #000; font-size: 14.500px; font-weight: 600; line-height: 22px; letter-spacing: -.5px; text-align: center; }
.ten { left: 27px; bottom: 8px; width: 20px; height: 20px; border: 1px solid #8d0d33; background: #cc1146; color: #fff; font-size: 13px; line-height: 18px; }
.tray { display: flex; align-items: center; margin-left: auto; padding-right: 5px; color: #111; font-size: 14.400px; }
.tray > svg { width: 20px; height: 20px; margin-right: 20.500px; }
.tray > .chev { width: 16px; height: 16px; margin-right: 22px; }
.tray > .onedrive { margin-right: 20px; }
.tray > .wifi { margin-right: 19px; }
.tray > .vol { width: 22px; margin-right: 24px; }
.lang { margin: 0 19px 0 3px; }
.clock { display: flex; flex-direction: column; align-items: center; line-height: 22.500px; width: 62px; margin-right: 26px; }
.clock span:first-child { letter-spacing: -.26px; }
.notes { position: relative; display: flex; margin-right: 25px; }
.notes svg { width: 20px; height: 20px; }
.n27 { left: 7px; bottom: -10px; height: 21px; line-height: 19px; }
.peek { width: 1px; height: 50px; background: #a3adb2; }
```
